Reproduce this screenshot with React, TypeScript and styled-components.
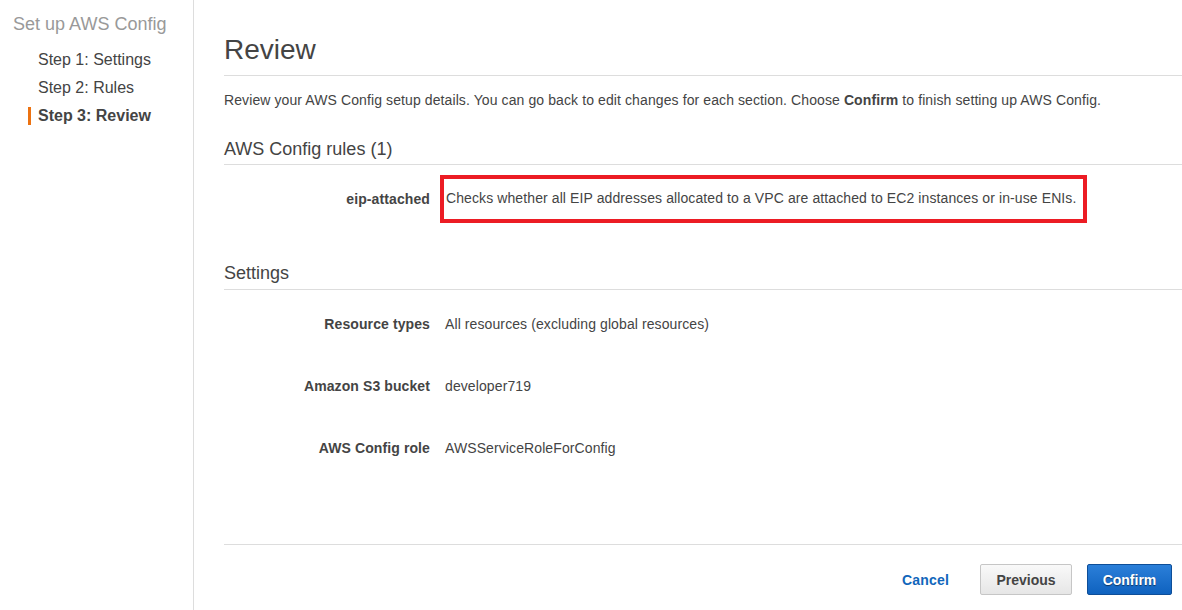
import React from "react";
import styled, { createGlobalStyle } from "styled-components";

const GlobalStyle = createGlobalStyle`
  html, body {
    margin: 0;
    padding: 0;
    background: #fff;
    font-family: "Liberation Sans", Arial, sans-serif;
    color: #444;
  }
`;

const Page = styled.div`
  display: flex;
  width: 1182px;
  height: 610px;
  overflow: hidden;
`;

const Sidebar = styled.nav`
  width: 194px;
  flex-shrink: 0;
  border-right: 1px solid #ddd;
  padding: 13px 0 0 13px;
  box-sizing: border-box;
`;

const SideTitle = styled.div`
  font-size: 18px;
  color: #999;
  line-height: 22px;
  margin-bottom: 16px;
`;

const StepList = styled.ul`
  list-style: none;
  margin: 0;
  padding: 0 0 0 15px;
`;

const Step = styled.li<{ $active?: boolean }>`
  font-size: 16px;
  color: #444;
  padding-left: 7px;
  font-weight: ${(p) => (p.$active ? "bold" : "normal")};
  border-left: 3px solid ${(p) => (p.$active ? "#ec7211" : "transparent")};
  line-height: 18px;
  margin-bottom: 10px;
`;

const Main = styled.main`
  flex: 1;
  padding: 32px 0 0 30px;
  display: flex;
  flex-direction: column;
`;

const PageTitle = styled.h1`
  margin: 0;
  font-size: 28px;
  font-weight: normal;
  line-height: 36px;
  color: #444;
  padding-bottom: 7px;
  border-bottom: 1px solid #ddd;
`;

const Intro = styled.p`
  margin: 15px 0 0;
  font-size: 14px;
  line-height: 18px;
  letter-spacing: 0.1px;
`;

const SectionTitle = styled.h2<{ $top: number; $pad: number }>`
  margin: ${(p) => p.$top}px 0 0;
  font-size: 18px;
  font-weight: normal;
  line-height: 22px;
  color: #444;
  padding-bottom: ${(p) => p.$pad}px;
  border-bottom: 1px solid #ddd;
`;

const SettingsList = styled.div`
  margin-top: 3px;
`;

const Row = styled.div<{ $height: number }>`
  display: grid;
  grid-template-columns: 206px 1fr;
  column-gap: 15px;
  align-items: center;
  height: ${(p) => p.$height}px;
  font-size: 14px;
  letter-spacing: 0.1px;
`;

const Label = styled.div`
  font-weight: bold;
  text-align: right;
`;

const Value = styled.div`
  color: #444;
`;

const Highlight = styled.div`
  justify-self: start;
  margin-left: -5px;
  border: 4px solid #ec1c24;
  padding: 11px 7px 12px 2px;
  line-height: 17px;
`;

const Footer = styled.div`
  margin-top: auto;
  margin-bottom: 15px;
  border-top: 1px solid #ddd;
  padding: 19px 10px 0 0;
  display: flex;
  justify-content: flex-end;
  align-items: center;
`;

const LinkButton = styled.button`
  background: none;
  border: none;
  font-family: inherit;
  font-size: 14px;
  font-weight: bold;
  color: #1166bb;
  padding: 0;
  margin-right: 31px;
  letter-spacing: 0.2px;
  cursor: pointer;
`;

const Button = styled.button<{ $primary?: boolean; $width: number }>`
  width: ${(p) => p.$width}px;
  height: 31px;
  padding: 0;
  font-family: inherit;
  font-size: 14px;
  font-weight: bold;
  border-radius: 2px;
  cursor: pointer;
  color: ${(p) => (p.$primary ? "#fff" : "#444")};
  border: 1px solid ${(p) => (p.$primary ? "#0e4e98" : "#c6c6c6")};
  background: ${(p) =>
    p.$primary
      ? "linear-gradient(#2b7fd9, #0f62bf)"
      : "linear-gradient(#f9f9f9, #e6e6e6)"};
  text-shadow: ${(p) => (p.$primary ? "0 1px 1px rgba(0,0,0,0.5)" : "none")};

  & + & {
    margin-left: 15px;
  }
`;

const settings = [
  { label: "Resource types", value: "All resources (excluding global resources)" },
  { label: "Amazon S3 bucket", value: "developer719" },
  { label: "AWS Config role", value: "AWSServiceRoleForConfig" },
];

export default function App() {
  return (
    <>
      <GlobalStyle />
      <Page>
        <Sidebar>
          <SideTitle>Set up AWS Config</SideTitle>
          <StepList>
            <Step>Step 1: Settings</Step>
            <Step>Step 2: Rules</Step>
            <Step $active>Step 3: Review</Step>
          </StepList>
        </Sidebar>
        <Main>
          <PageTitle>Review</PageTitle>
          <Intro>
            Review your AWS Config setup details. You can go back to edit changes for each
            section. Choose <b>Confirm</b> to finish setting up AWS Config.
          </Intro>
          <SectionTitle $top={29} $pad={4}>
            AWS Config rules (1)
          </SectionTitle>
          <Row $height={68}>
            <Label>eip-attached</Label>
            <Highlight>
              Checks whether all EIP addresses allocated to a VPC are attached to EC2 instances or
              in-use ENIs.
            </Highlight>
          </Row>
          <SectionTitle $top={29} $pad={5}>
            Settings
          </SectionTitle>
          <SettingsList>
            {settings.map((s) => (
              <Row key={s.label} $height={62}>
                <Label>{s.label}</Label>
                <Value>{s.value}</Value>
              </Row>
            ))}
          </SettingsList>
          <Footer>
            <LinkButton>Cancel</LinkButton>
            <Button $width={92}>Previous</Button>
            <Button $primary $width={85}>
              Confirm
            </Button>
          </Footer>
        </Main>
      </Page>
    </>
  );
}
